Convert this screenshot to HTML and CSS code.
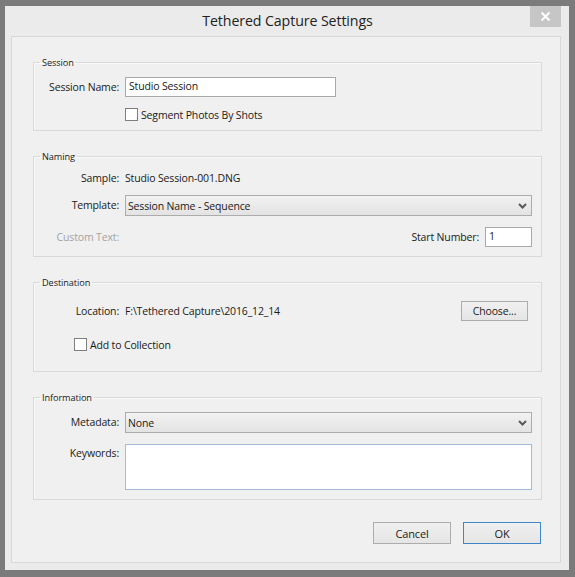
FILE: index.html
```html
<!DOCTYPE html>
<html>
<head>
<meta charset="utf-8">
<title>Tethered Capture Settings</title>
<link rel="stylesheet" href="styles.css">
</head>
<body>
<div class="window">
  <div class="titlebar">
    <span></span>
    <div class="title">Tethered Capture Settings</div>
    <div class="close">
      <svg width="11" height="11" viewBox="0 0 11 11"><path d="M1.5 1.5 L9.5 9.5 M9.5 1.5 L1.5 9.5" stroke="#fff" stroke-width="2" fill="none"/></svg>
    </div>
  </div>
  <div class="panel">
    <fieldset class="group g-session">
      <legend>Session</legend>
      <div class="row r20">
        <label class="lbl">Session Name:</label>
        <div class="textbox tb-name">Studio Session</div>
      </div>
      <div class="row r13 gap11">
        <span class="lbl"></span>
        <div class="check"><span class="box"></span><span>Segment Photos By Shots</span></div>
      </div>
    </fieldset>

    <fieldset class="group g-naming">
      <legend>Naming</legend>
      <div class="row r20">
        <span class="lbl">Sample:</span>
        <span class="val">Studio Session-001.DNG</span>
      </div>
      <div class="row r21 gap7">
        <span class="lbl">Template:</span>
        <div class="combo"><span>Session Name - Sequence</span><svg class="chev" width="9" height="6" viewBox="0 0 9 6"><path d="M1 1 L4.5 4.5 L8 1" stroke="#5a5a5a" stroke-width="2" fill="none"/></svg></div>
      </div>
      <div class="row r20 gap11">
        <span class="lbl disabled">Custom Text:</span>
        <div class="split">
          <span></span>
          <div class="startnum"><span>Start Number:</span><div class="textbox tb-num">1</div></div>
        </div>
      </div>
    </fieldset>

    <fieldset class="group g-dest">
      <legend>Destination</legend>
      <div class="row r20">
        <span class="lbl">Location:</span>
        <div class="split">
          <span class="val">F:\Tethered Capture\2016_12_14</span>
          <div class="btn btn-choose">Choose...</div>
        </div>
      </div>
      <div class="row r13 gap17">
        <div class="check check-wide"><span class="box"></span><span>Add to Collection</span></div>
      </div>
    </fieldset>

    <fieldset class="group g-info">
      <legend>Information</legend>
      <div class="row r21">
        <span class="lbl">Metadata:</span>
        <div class="combo"><span>None</span><svg class="chev" width="9" height="6" viewBox="0 0 9 6"><path d="M1 1 L4.5 4.5 L8 1" stroke="#5a5a5a" stroke-width="2" fill="none"/></svg></div>
      </div>
      <div class="row top gap11">
        <span class="lbl kw">Keywords:</span>
        <div class="textarea"></div>
      </div>
    </fieldset>

    <div class="actions">
      <div class="btn btn-act">Cancel</div>
      <div class="btn btn-act btn-default">OK</div>
    </div>
  </div>
</div>
</body>
</html>
```
FILE: styles.css
```css
html, body {
  margin: 0;
  padding: 0;
}
body {
  background: #7b7b7b;
  width: 575px;
  height: 577px;
  padding: 6px 6px 7px 5px;
  box-sizing: border-box;
  font-family: "Open Sans", "Noto Sans", sans-serif;
  font-size: 10.5px;
  letter-spacing: -0.15px;
  color: #1a1a1a;
}
.window {
  background: #ebebeb;
  height: 564px;
  width: 564px;
  display: flex;
  flex-direction: column;
}
.titlebar {
  height: 30px;
  display: grid;
  grid-template-columns: 1fr auto 1fr;
  align-items: start;
}
.title {
  font-size: 14.2px;
  letter-spacing: -0.1px;
  color: #222;
  line-height: 30px;
  padding-left: 1px;
}
.close {
  justify-self: end;
  margin-right: 8px;
  width: 31px;
  height: 21px;
  background: #c6c6c6;
  display: flex;
  align-items: center;
  justify-content: center;
}
.panel {
  margin: 0 8px 0 6px;
  height: 527px;
  box-sizing: border-box;
  border: 1px solid #d8d8d8;
  background: #f0f0f0;
  padding: 19px 18px 0 21px;
  display: flex;
  flex-direction: column;
}
.group {
  margin: 0;
  padding: 0 9px 9px 0;
  border: 1px solid #d9d9d9;
  box-shadow: inset 1px 1px 0 #fafafa;
  min-width: 0;
}
.group + .group {
  margin-top: 19px;
}
.group legend {
  font-size: 9.2px;
  letter-spacing: -0.1px;
  line-height: 12px;
  padding: 0 2px;
  margin-left: 6px;
  color: #1a1a1a;
  position: relative;
  top: 1px;
}
.g-session { padding-top: 9px; }
.g-naming { padding-top: 6px; }
.g-dest { padding-top: 13px; padding-bottom: 20px; }
.g-info { padding-top: 9px; }

.row {
  display: flex;
  align-items: center;
}
.row.top { align-items: flex-start; }
.r20 { height: 20px; }
.r21 { height: 21px; }
.r13 { height: 13px; }
.gap7 { margin-top: 7px; }
.gap11 { margin-top: 11px; }
.gap17 { margin-top: 17px; }

.lbl {
  width: 85px;
  flex: none;
  text-align: right;
  margin-right: 6px;
  white-space: nowrap;
  line-height: 18px;
  margin-top: -1px;
}
.lbl.disabled { color: #a3a3a3; }
.lbl.kw { margin-top: 0; }
.val { white-space: nowrap; padding-left: 0; line-height: 18px; margin-top: -1px; }

.textbox {
  box-sizing: border-box;
  height: 20px;
  background: #fff;
  border: 1px solid #a9a9a9;
  padding: 0 3px;
  line-height: 17px;
}
.tb-name { width: 211px; }
.tb-num { width: 47px; margin-left: 6px; }

.combo {
  box-sizing: border-box;
  flex: 1;
  height: 21px;
  border: 1px solid #acacac;
  background: linear-gradient(#f2f2f2, #e3e3e3);
  display: flex;
  align-items: center;
  justify-content: space-between;
  padding: 0 4px 0 2px;
}
.chev { margin-right: 0; }

.split {
  flex: 1;
  display: flex;
  justify-content: space-between;
  align-items: center;
}
.startnum {
  display: flex;
  align-items: center;
}

.check {
  display: flex;
  align-items: center;
}
.check-wide { margin-left: 40px; }
.box {
  box-sizing: border-box;
  width: 13px;
  height: 13px;
  border: 1px solid #7f7f7f;
  background: #fff;
  margin-right: 3px;
}

.btn {
  box-sizing: border-box;
  border: 1px solid #acacac;
  background: linear-gradient(#f0f0f0, #e5e5e5);
  display: flex;
  align-items: center;
  justify-content: center;
  color: #1a1a1a;
}
.btn-choose {
  width: 67px;
  height: 20px;
  margin-right: 4px;
}
.textarea {
  box-sizing: border-box;
  flex: 1;
  height: 46px;
  background: #fff;
  border: 1px solid #a3bbd6;
}

.actions {
  margin-top: 22px;
  margin-right: 1px;
  display: flex;
  justify-content: flex-end;
  gap: 12px;
}
.btn-act {
  width: 78px;
  height: 22px;
  font-size: 11px;
}
.btn-default {
  border-color: #3f86c6;
}
```
